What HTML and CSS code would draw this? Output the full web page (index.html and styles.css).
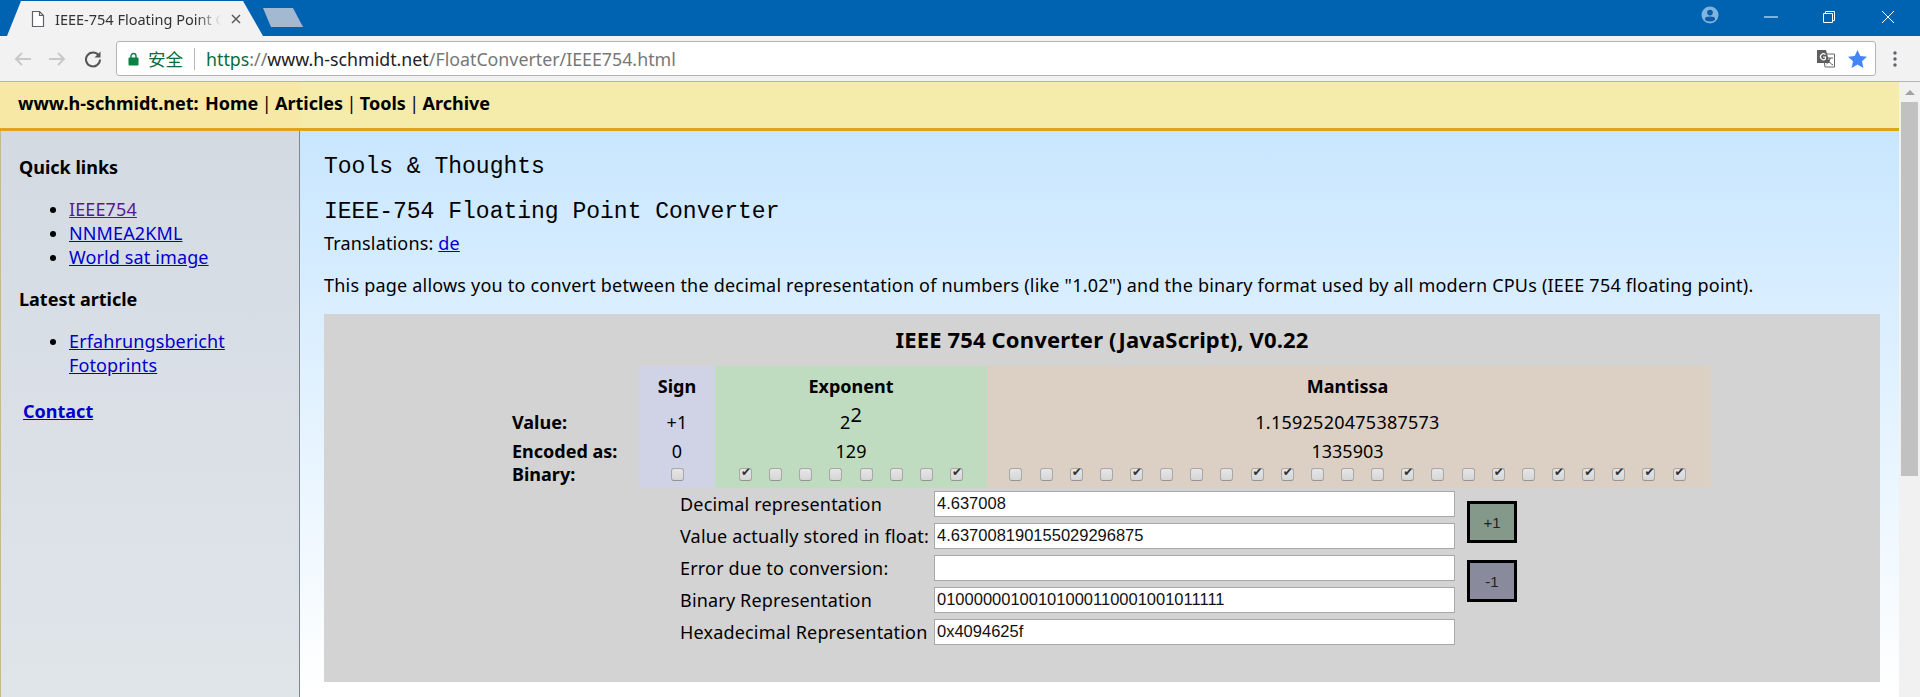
FILE: index.html
```html
<!DOCTYPE html>
<html lang="zh">
<head>
    <meta charset="UTF-8">
    <title>IEEE-754 Floating Point Converter</title>
    <link rel="stylesheet" href="styles.css">
</head>
<body>
    <div class="tabstrip">
        <div class="tab">
            <svg class="tab-icon" width="14" height="18" viewBox="0 0 14 18"><path d="M1.500 1.500h7l4 4v11h-11z M8.500 1.500v4h4" fill="#fff" stroke="#5f6368" stroke-width="1.200"/></svg>
            <span class="tab-title">IEEE-754 Floating Point Converter</span>
            <svg class="tab-close" width="10" height="10" viewBox="0 0 10 10"><path d="M1 1l8 8M9 1l-8 8" stroke="#5a5a5a" stroke-width="1.500"/></svg>
        </div>
        <div class="newtab"></div>
        <div class="window-controls">
            <svg class="profile" width="18" height="18" viewBox="0 0 18 18"><circle cx="9" cy="9" r="8.500" fill="#7fb3e0"/><circle cx="9" cy="6.600" r="2.800" fill="#0a5ca8"/><ellipse cx="9" cy="13" rx="5" ry="2.400" fill="#0a5ca8"/></svg>
            <svg class="minimize" width="14" height="2" viewBox="0 0 14 2"><path d="M0 1h14" stroke="#fff" stroke-width="1"/></svg>
            <svg class="restore" width="14" height="14" viewBox="0 0 14 14"><path d="M1.500 3.500h9v9h-9z M3.500 3.500v-2h9v9h-2" fill="none" stroke="#fff" stroke-width="1"/></svg>
            <svg class="close" width="14" height="14" viewBox="0 0 14 14"><path d="M1 1l12 12M13 1L1 13" stroke="#fff" stroke-width="1"/></svg>
        </div>
    </div>

    <div class="toolbar">
        <svg class="nav-btn" width="20" height="16" viewBox="0 0 20 16"><path d="M18 8H3M9 2L3 8l6 6" fill="none" stroke="#c8c8c8" stroke-width="2"/></svg>
        <svg class="nav-btn" width="20" height="16" viewBox="0 0 20 16"><path d="M2 8h15M11 2l6 6-6 6" fill="none" stroke="#c8c8c8" stroke-width="2"/></svg>
        <svg class="nav-btn reload" width="18" height="18" viewBox="0 0 18 18"><path d="M14.600 5.200A7 7 0 1 0 16 9.500" fill="none" stroke="#555" stroke-width="2"/><path d="M16.500 1.500v6h-6z" fill="#555"/></svg>
        <div class="omnibox">
            <svg class="lock" width="11" height="14" viewBox="0 0 11 14"><path d="M3 6V4a2.500 2.500 0 0 1 5 0v2" fill="none" stroke="#0b8043" stroke-width="1.400"/><rect x="0.500" y="5.500" width="10" height="8" rx="1" fill="#0b8043"/></svg>
            <span class="secure">安全</span>
            <span class="divider"></span>
            <span class="url"><span class="url-https">https</span><span class="url-path">://</span>www.h-schmidt.net<span class="url-path">/FloatConverter/IEEE754.html</span></span>
            <svg class="translate" width="19" height="18" viewBox="0 0 19 18"><path d="M7 4h11.500v13H9z" fill="#fff" stroke="#666"/><path d="M1 0h9l3.500 13H1z" fill="#5f5f5f"/><path d="M9.500 4.500a3 3 0 1 0 0 4.500V7H7" fill="none" stroke="#fff" stroke-width="1.200"/><path d="M11 8h6M14 8c0 3-2 5-3.500 6M12 10c1 2 3 4 5 5" fill="none" stroke="#555"/></svg>
            <svg class="star" width="19" height="18" viewBox="0 0 19 18"><path d="M9.500 0l2.800 6 6.700.8-5 4.500 1.400 6.700-5.900-3.400L3.600 18 5 11.300 0 6.800 6.700 6z" fill="#4285f4"/></svg>
        </div>
        <svg class="menu" width="4" height="18" viewBox="0 0 4 18"><circle cx="2" cy="3" r="1.700" fill="#5f6368"/><circle cx="2" cy="9" r="1.700" fill="#5f6368"/><circle cx="2" cy="15" r="1.700" fill="#5f6368"/></svg>
    </div>

    <div class="viewport">
        <div class="page">
            <div class="topbar">
                <span class="site">www.h-schmidt.net:</span> <b>Home</b> | <b>Articles</b> | <b>Tools</b> | <b>Archive</b>
            </div>
            <div class="columns">
                <aside class="sidebar">
                    <h3>Quick links</h3>
                    <ul>
                        <li><a href="#" class="visited">IEEE754</a></li>
                        <li><a href="#">NNMEA2KML</a></li>
                        <li><a href="#">World sat image</a></li>
                    </ul>
                    <h3>Latest article</h3>
                    <ul>
                        <li><a href="#">Erfahrungsbericht Fotoprints</a></li>
                    </ul>
                    <a href="#" class="contact">Contact</a>
                </aside>
                <main class="content">
                    <h1>Tools &amp; Thoughts</h1>
                    <h2>IEEE-754 Floating Point Converter</h2>
                    <p class="translations">Translations: <a href="#">de</a></p>
                    <p class="intro">This page allows you to convert between the decimal representation of numbers (like "1.02") and the binary format used by all modern CPUs (IEEE 754 floating point).</p>

                    <div class="converter">
                        <div class="converter-title">IEEE 754 Converter (JavaScript), V0.22</div>
                        <div class="bits">
                            <div class="row-labels">
                                <div>Value:</div>
                                <div class="encoded-label">Encoded as:</div>
                                <div class="binary-label">Binary:</div>
                            </div>
                            <div class="field sign">
                                <div class="field-name">Sign</div>
                                <div class="field-value">+1</div>
                                <div class="field-encoded">0</div>
                                <div class="checks">
                                    <input type="checkbox">
                                </div>
                            </div>
                            <div class="field exponent">
                                <div class="field-name">Exponent</div>
                                <div class="field-value">2<sup>2</sup></div>
                                <div class="field-encoded">129</div>
                                <div class="checks">
                                    <input type="checkbox" checked>
                                    <input type="checkbox">
                                    <input type="checkbox">
                                    <input type="checkbox">
                                    <input type="checkbox">
                                    <input type="checkbox">
                                    <input type="checkbox">
                                    <input type="checkbox" checked>
                                </div>
                            </div>
                            <div class="field mantissa">
                                <div class="field-name">Mantissa</div>
                                <div class="field-value">1.1592520475387573</div>
                                <div class="field-encoded">1335903</div>
                                <div class="checks">
                                    <input type="checkbox">
                                    <input type="checkbox">
                                    <input type="checkbox" checked>
                                    <input type="checkbox">
                                    <input type="checkbox" checked>
                                    <input type="checkbox">
                                    <input type="checkbox">
                                    <input type="checkbox">
                                    <input type="checkbox" checked>
                                    <input type="checkbox" checked>
                                    <input type="checkbox">
                                    <input type="checkbox">
                                    <input type="checkbox">
                                    <input type="checkbox" checked>
                                    <input type="checkbox">
                                    <input type="checkbox">
                                    <input type="checkbox" checked>
                                    <input type="checkbox">
                                    <input type="checkbox" checked>
                                    <input type="checkbox" checked>
                                    <input type="checkbox" checked>
                                    <input type="checkbox" checked>
                                    <input type="checkbox" checked>
                                </div>
                            </div>
                        </div>
                        <div class="values">
                            <div class="value-rows">
                                <label>Decimal representation</label>
                                <input type="text" value="4.637008">
                                <label>Value actually stored in float:</label>
                                <input type="text" value="4.637008190155029296875">
                                <label>Error due to conversion:</label>
                                <input type="text" value="">
                                <label>Binary Representation</label>
                                <input type="text" value="01000000100101000110001001011111">
                                <label>Hexadecimal Representation</label>
                                <input type="text" value="0x4094625f">
                            </div>
                            <div class="steppers">
                                <button type="button" class="plus">+1</button>
                                <button type="button" class="minus">-1</button>
                            </div>
                        </div>
                    </div>
                </main>
            </div>
        </div>
        <div class="scrollbar">
            <div class="scroll-arrow"></div>
            <div class="scroll-thumb"></div>
        </div>
    </div>
</body>
</html>
```

FILE: styles.css
```css
* {
    box-sizing: border-box;
}

html, body {
    height: 100%;
}

body {
    margin: 0;
    overflow: hidden;
    display: flex;
    flex-direction: column;
    background-color: #fff;
    font-family: 'Noto Sans', 'Noto Sans CJK SC', sans-serif;
    color: #000;
}

/* browser frame */
.tabstrip {
    height: 36px;
    flex: none;
    display: flex;
    align-items: flex-end;
    padding-left: 7px;
    background-color: #0063b1;
}

.tab {
    width: 256px;
    height: 35px;
    display: flex;
    align-items: center;
    padding: 0 22px 0 24px;
    background-color: #f2f2f2;
    clip-path: polygon(0 100%, 14px 0, 236px 0, 100% 100%);
}

.tab-icon {
    flex: none;
    margin-right: 10px;
}

.tab-title {
    flex: 1;
    overflow: hidden;
    white-space: nowrap;
    font-size: 14.500px;
    color: #333;
    -webkit-mask-image: linear-gradient(90deg, #000 85%, transparent);
    mask-image: linear-gradient(90deg, #000 85%, transparent);
}

.tab-close {
    flex: none;
    margin-left: 10px;
}

.newtab {
    width: 40px;
    height: 19px;
    margin: 0 0 9px 0;
    background-color: #a3b9d2;
    clip-path: polygon(0 0, 30px 0, 100% 100%, 8px 100%);
}

.window-controls {
    margin-left: auto;
    height: 36px;
    display: flex;
    align-items: center;
    padding-right: 25px;
}

.profile {
    margin: -7px 45px 0 0;
}

.minimize {
    margin: -2px 44px 0 0;
}

.restore {
    margin: -3px 45px 0 0;
}

.close {
    margin-top: -3px;
}

.toolbar {
    height: 46px;
    flex: none;
    display: flex;
    align-items: center;
    padding-left: 13px;
    background-color: #f2f2f2;
    border-bottom: 1px solid #b4b4b4;
}

.nav-btn {
    margin-right: 14px;
}

.reload {
    margin-left: 3px;
}

.omnibox {
    width: 1760px;
    height: 35px;
    display: flex;
    align-items: center;
    padding: 0 8px 0 11px;
    background-color: #fff;
    border: 1px solid #b4b4b4;
    border-radius: 3px;
}

.lock {
    flex: none;
    margin-right: 9px;
}

.secure {
    font-size: 17.500px;
    color: #0b6b3a;
}

.divider {
    width: 1px;
    height: 22px;
    margin: 0 11px;
    background-color: #b8b8b8;
}

.url {
    flex: 1;
    font-size: 17.800px;
    white-space: nowrap;
    color: #222;
}

.url-https {
    color: #0b6b3a;
}

.url-path {
    color: #777;
}

.translate {
    margin-right: 13px;
}

.menu {
    margin-left: 17px;
}

/* page */
.viewport {
    flex: 1;
    min-height: 0;
    display: flex;
}

.page {
    flex: 1;
    min-width: 0;
    display: flex;
    flex-direction: column;
}

.topbar {
    height: 49px;
    flex: none;
    padding: 9px 0 0 18px;
    background: linear-gradient(90deg, #f7e8a6 300px, #f5ebab 300px);
    border-bottom: 3px solid #dba61c;
    font-size: 18px;
    word-spacing: -1.300px;
}

.site {
    margin-right: 3px;
    font-weight: bold;
}

.columns {
    flex: 1;
    min-height: 0;
    display: flex;
}

.sidebar {
    width: 300px;
    flex: none;
    padding: 24px 0 0 18px;
    background: linear-gradient(#d4dae2, #e0e5ea);
    border-left: 1px solid #c8b88a;
    border-right: 1px solid #7d8790;
    font-size: 18px;
    line-height: 24px;
}

.sidebar h3 {
    margin: 0 0 18px;
    font-size: 18px;
    line-height: 24px;
}

.sidebar ul {
    margin: 0 0 18px;
    padding-left: 50px;
    letter-spacing: 0.120px;
}

.sidebar a, .translations a {
    color: #0000cc;
}

.sidebar a.visited {
    color: #551a8b;
}

.contact {
    display: block;
    margin: 22px 0 0 4px;
    font-weight: bold;
}

.content {
    flex: 1;
    min-width: 0;
    padding: 22px 19px 0 24px;
    background: linear-gradient(#c8e6ff, #fff 560px);
}

h1, h2 {
    margin: 0;
    font-family: 'Liberation Mono', monospace;
    font-size: 23px;
    font-weight: normal;
    line-height: 28px;
}

h2 {
    margin-top: 17px;
}

.content p {
    margin: 0;
    font-size: 18px;
    line-height: 24px;
    letter-spacing: 0.210px;
}

.content .translations {
    margin-top: 5px;
    letter-spacing: 0.160px;
}

.content .intro {
    margin-top: 18px;
}

/* converter box */
.converter {
    height: 368px;
    margin-top: 17px;
    padding-top: 10px;
    background-color: #d3d3d3;
}

.converter-title {
    height: 42px;
    font-size: 22px;
    font-weight: bold;
    line-height: 30px;
    text-align: center;
    letter-spacing: 0.150px;
}

.bits {
    height: 122px;
    padding-left: 315px;
    display: flex;
}

.row-labels {
    width: 0;
    padding-top: 42px;
    font-size: 18px;
    font-weight: bold;
    line-height: 28px;
    white-space: nowrap;
    direction: rtl;
}

.row-labels div {
    direction: ltr;
    width: 127px;
}

.row-labels .encoded-label {
    margin-top: 1px;
}

.row-labels .binary-label {
    margin-top: -5px;
}

.field {
    display: flex;
    flex-direction: column;
    text-align: center;
    font-size: 18px;
}

.sign {
    width: 76px;
    background-color: #d0d2e6;
}

.exponent {
    width: 272px;
    background-color: #c0dcc0;
}

.mantissa {
    width: 724px;
    padding-right: 3px;
    background-color: #dcd0c4;
}

.field-name {
    height: 38px;
    font-weight: bold;
    line-height: 41px;
}

.field-value {
    height: 32px;
    line-height: 36px;
    letter-spacing: 0.250px;
}

.field-value sup {
    font-size: 20px;
    line-height: 0;
}

.field-encoded {
    height: 28px;
    line-height: 30px;
}

.checks {
    display: flex;
    justify-content: center;
    gap: 17.150px;
    padding-top: 4px;
}

.checks input {
    appearance: none;
    width: 13px;
    height: 13px;
    margin: 0;
    position: relative;
    background: linear-gradient(#e6e6e6, #d6d6d6);
    border: 1px solid #a8a8a8;
    border-bottom-color: #949494;
    border-radius: 3px;
}

.checks input:checked::after {
    content: "✔";
    position: absolute;
    left: 1px;
    top: -4px;
    font-family: 'DejaVu Sans', sans-serif;
    font-size: 12px;
    color: #333;
}

.values {
    display: flex;
    padding: 3px 0 0 356px;
}

.value-rows {
    display: grid;
    grid-template-columns: 254px 521px;
    grid-auto-rows: 26px;
    row-gap: 6px;
    align-items: center;
}

.value-rows label {
    font-size: 18px;
    white-space: nowrap;
    letter-spacing: 0.180px;
}

.value-rows input {
    width: 100%;
    height: 26px;
    padding: 0 1px 2px 2px;
    background-color: #fff;
    border: 1px solid #a9a9a9;
    font-family: 'Liberation Sans', sans-serif;
    font-size: 16.500px;
    color: #111;
}

.steppers {
    display: flex;
    flex-direction: column;
    gap: 17px;
    padding: 10px 0 0 12px;
}

.steppers button {
    width: 50px;
    height: 42px;
    padding: 0;
    border: 3px solid #000;
    font-family: 'Liberation Sans', sans-serif;
    font-size: 15px;
    color: #222;
}

.plus {
    background-color: #85998a;
}

.minus {
    background-color: #8a8a9d;
}

.scrollbar {
    width: 21px;
    flex: none;
    padding: 0 2px;
    background-color: #f1f1f1;
}

.scroll-arrow {
    width: 0;
    margin: 8px auto 7px;
    border: 5px solid transparent;
    border-top: 0;
    border-bottom: 5px solid #a3a3a3;
}

.scroll-thumb {
    height: 374px;
    background-color: #c1c1c1;
}
```
